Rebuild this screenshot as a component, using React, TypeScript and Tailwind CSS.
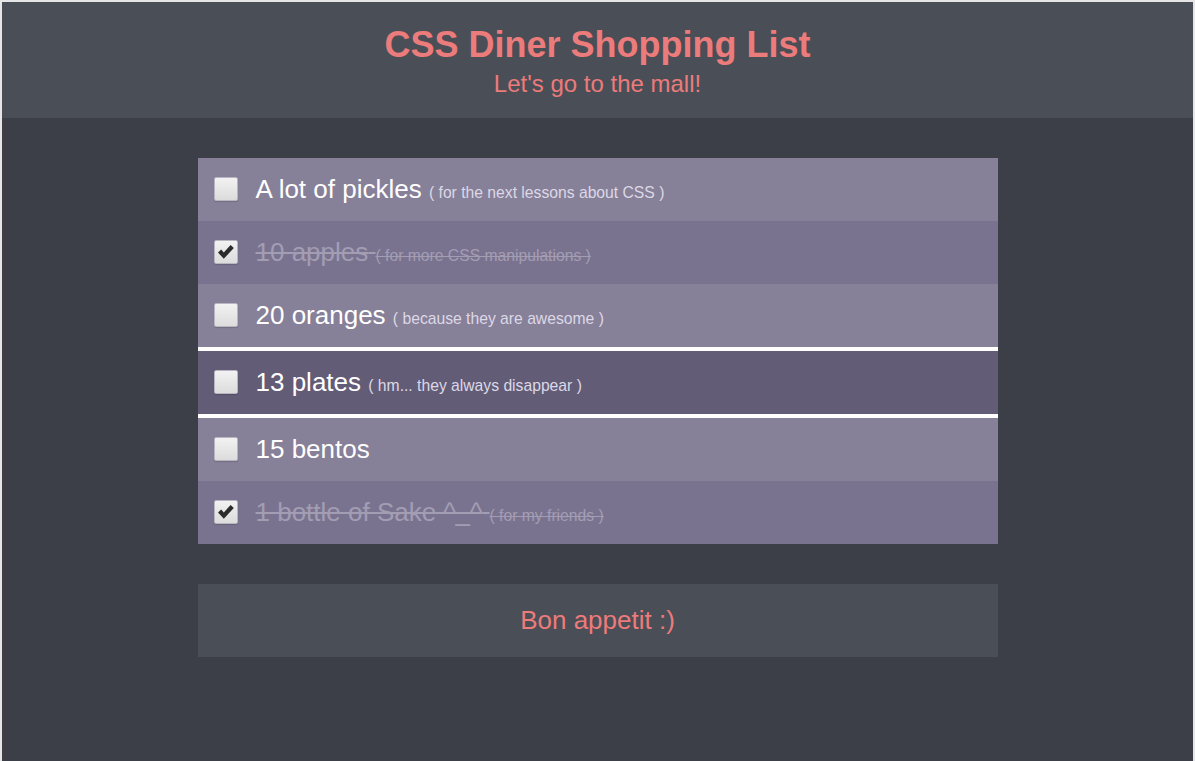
import React from "react";

interface Item {
  label: string;
  note?: string;
  done?: boolean;
  active?: boolean;
}

const items: Item[] = [
  { label: "A lot of pickles", note: "( for the next lessons about CSS )" },
  { label: "10 apples", note: "( for more CSS manipulations )", done: true },
  { label: "20 oranges", note: "( because they are awesome )" },
  { label: "13 plates", note: "( hm... they always disappear )", active: true },
  { label: "15 bentos" },
  { label: "1 bottle of Sake ^_^", note: "( for my friends )", done: true },
];

function Checkbox({ checked }: { checked?: boolean }) {
  return (
    <span className="-mt-0.5 flex h-6 w-6 shrink-0 items-center justify-center rounded-[2px] border border-[#b9b6c2] bg-gradient-to-b from-[#f2f2f2] to-[#dcdcdc] shadow-[0_1px_1px_rgba(0,0,0,0.15)]">
      {checked && (
        <svg width="18" height="16" viewBox="0 0 18 16">
          <path d="M1 8.6 L4.2 5.6 L6.8 8.4 L13.6 1 L16.8 4 L6.8 14.8 Z" fill="#2b2b2b" />
        </svg>
      )}
    </span>
  );
}

function Row({ item }: { item: Item }) {
  const bg = item.active ? "bg-[#625c77] border-y-4 border-white" : item.done ? "bg-[#7a738f]" : "bg-[#878099]";
  const strike = item.done ? "line-through decoration-[2px]" : "";
  return (
    <li className={`flex h-[63px] items-center pl-4 ${bg}`} style={{ boxSizing: "content-box" }}>
      <Checkbox checked={item.done} />
      <span className={`-mt-0.5 ml-[18px] whitespace-nowrap ${item.done ? "text-[#a39db4]" : "text-white"}`}>
        <span className={`text-[26px] leading-8 ${strike}`}>
          {item.label}
          {item.note ? " " : ""}
        </span>
        {item.note && (
          <span className={`text-[15.7px] ${item.done ? "text-[#a39db4] line-through decoration-[1px]" : "text-[#dcd8e6]"}`}>
            {item.note}
          </span>
        )}
      </span>
    </li>
  );
}

export default function App() {
  return (
    <div
      className="min-h-[761px] w-full border-2 border-b-0 border-[#e6e6e6] bg-[#3c3f47] pb-[100px]"
      style={{ fontFamily: '"Liberation Sans", Arial, sans-serif' }}
    >
      {/* Header */}
      <header className="flex h-[116px] flex-col items-center bg-[#4a4e56] pt-[23px] text-[#ec7b7b]">
        <h1 className="text-[36px] font-bold leading-10">CSS Diner Shopping List</h1>
        <p className="mt-[5px] text-[24px] leading-7">Let's go to the mall!</p>
      </header>

      {/* Shopping list */}
      <ul className="mx-auto mt-10 w-[800px]">
        {items.map((item, i) => (
          <Row key={i} item={item} />
        ))}
      </ul>

      {/* Footer */}
      <div className="mx-auto mt-10 flex h-[73px] w-[800px] items-center justify-center bg-[#4a4e56] text-[26px] text-[#ec7b7b]">
        Bon appetit :)
      </div>
    </div>
  );
}
